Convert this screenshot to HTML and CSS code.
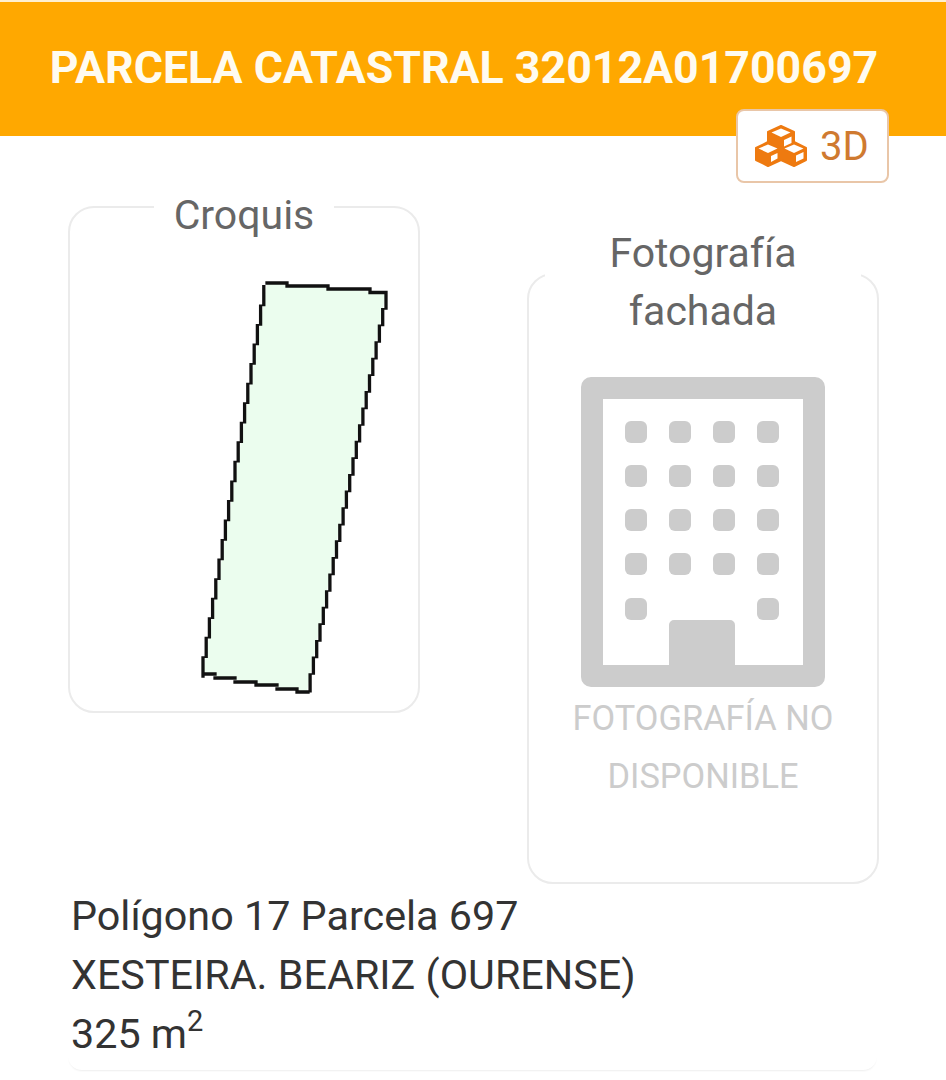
FILE: index.html
```html
<!DOCTYPE html>
<html lang="es">
<head>
<meta charset="utf-8">
<title>Parcela catastral</title>
<link rel="stylesheet" href="styles.css">
</head>
<body>
<header class="head"><h1 class="head-title">PARCELA CATASTRAL 32012A01700697</h1></header>
<a class="btn3d" href="#">
  <svg class="cubes" viewBox="0 0 52 42" aria-hidden="true">
    <g fill="#ee7a10" stroke="#ee7a10" stroke-width="2" stroke-linejoin="round">
      <path d="M26 1 39 7V20L26 26 13 20V7Z"/>
      <path d="M13 17 26 23V35L13 41 1 35V23Z"/>
      <path d="M39 17 51 23V35L39 41 26 35V23Z"/>
    </g>
    <g fill="#fff">
      <path d="M26 3.500 35.500 7.500 26 12 16.500 7.500Z"/>
      <path d="M13 19.500 22.500 23.500 13 28 3.500 23.500Z"/>
      <path d="M39 19.500 48.500 23.500 39 28 29.500 23.500Z"/>
      <path d="M36.500 11.500V18L29 21.500V15Z"/>
      <path d="M48.500 27V33.500L41 37V30.500Z"/>
      <path d="M22.500 28V33.500L16 37V31Z"/>
    </g>
  </svg>
  <span>3D</span>
</a>
<main class="panels">
  <fieldset class="box box-sketch">
    <legend class="box-label">Croquis</legend>
    <svg class="sketch" viewBox="70 243 348 468" aria-label="Croquis de la parcela">
      <path class="parcel-fill" d="M267 282 386 292 306.800 691 203 673Z"/>
      <path class="parcel-line" d="M267 282H287M287 285H328M328 288H370M370 291.500H386
      M386 292v15
      m-3.300 1.600v15m-3.300 1.600v15m-3.300 1.600v15m-3.300 1.600v15m-3.300 1.600v15m-3.300 1.600v15
      m-3.300 1.600v15m-3.300 1.600v15m-3.300 1.600v15m-3.300 1.600v15m-3.300 1.600v15m-3.300 1.600v15
      m-3.300 1.600v15m-3.300 1.600v15m-3.300 1.600v15m-3.300 1.600v15m-3.300 1.600v15m-3.300 1.600v15
      m-3.300 1.600v15m-3.300 1.600v15m-3.300 1.600v15m-3.300 1.600v15m-3.300 1.600v16
      M308 691H297M297 688H277M277 684H256M256 681H235M235 677H215M215 673H203
      M203 675v-18
      m3.200 -1.550v-18m3.200 -1.550v-18m3.200 -1.550v-18m3.200 -1.550v-18m3.200 -1.550v-18m3.200 -1.550v-18
      m3.200 -1.550v-18m3.200 -1.550v-18m3.200 -1.550v-18m3.200 -1.550v-18m3.200 -1.550v-18m3.200 -1.550v-18
      m3.200 -1.550v-18m3.200 -1.550v-18m3.200 -1.550v-18m3.200 -1.550v-18m3.200 -1.550v-18m3.200 -1.550v-18
      m3.200 -1.550v-18"/>
    </svg>
  </fieldset>
  <fieldset class="box box-photo">
    <legend class="box-label box-label-wide">Fotografía fachada</legend>
    <svg class="building" viewBox="0 0 244 310" aria-hidden="true">
      <path class="building-shape" fill-rule="evenodd" d="M10 0H234A10 10 0 0 1 244 10V300A10 10 0 0 1 234 310H10A10 10 0 0 1 0 300V10A10 10 0 0 1 10 0ZM22 22V288H88V248A5 5 0 0 1 93 243H149A5 5 0 0 1 154 248V288H222V22Z"/>
      <g class="building-shape">
        <rect x="44" y="44" width="22" height="22" rx="6"/><rect x="88" y="44" width="22" height="22" rx="6"/><rect x="132" y="44" width="22" height="22" rx="6"/><rect x="176" y="44" width="22" height="22" rx="6"/>
        <rect x="44" y="88" width="22" height="22" rx="6"/><rect x="88" y="88" width="22" height="22" rx="6"/><rect x="132" y="88" width="22" height="22" rx="6"/><rect x="176" y="88" width="22" height="22" rx="6"/>
        <rect x="44" y="132" width="22" height="22" rx="6"/><rect x="88" y="132" width="22" height="22" rx="6"/><rect x="132" y="132" width="22" height="22" rx="6"/><rect x="176" y="132" width="22" height="22" rx="6"/>
        <rect x="44" y="176" width="22" height="22" rx="6"/><rect x="88" y="176" width="22" height="22" rx="6"/><rect x="132" y="176" width="22" height="22" rx="6"/><rect x="176" y="176" width="22" height="22" rx="6"/>
        <rect x="44" y="221" width="22" height="22" rx="6"/><rect x="176" y="221" width="22" height="22" rx="6"/>
      </g>
    </svg>
    <p class="no-photo">FOTOGRAFÍA NO DISPONIBLE</p>
  </fieldset>
</main>
<section class="info">
  <p>Polígono 17 Parcela 697</p>
  <p>XESTEIRA. BEARIZ (OURENSE)</p>
  <p>325 m<sup class="sq">2</sup></p>
</section>
</body>
</html>
```
FILE: styles.css
```css
* { box-sizing: border-box; }
html, body { margin: 0; padding: 0; background: #fff; }
body {
  width: 946px;
  height: 1080px;
  overflow: hidden;
  position: relative;
  font-family: Roboto, "Liberation Sans", sans-serif;
}
.head {
  height: 136px;
  padding-right: 18px;
  background: #ffa800;
  border-top: 2px solid #fff0d0;
  display: flex;
  align-items: center;
  justify-content: center;
}
.head-title {
  margin: 0 0 2px;
  color: #fffbf0;
  font-size: 44.700px;
  font-weight: 700;
  white-space: nowrap;
}
.btn3d {
  position: absolute;
  left: 736px;
  top: 109px;
  width: 153px;
  height: 74px;
  display: flex;
  align-items: center;
  gap: 13px;
  padding-left: 17px;
  background: #fff;
  border: 2px solid #e9c6a8;
  border-radius: 8px;
  color: #cf7a30;
  font-size: 40px;
  text-decoration: none;
}
.cubes { width: 52px; height: 42px; flex: none; }
.panels {
  display: flex;
  align-items: flex-start;
  gap: 107px;
  padding-left: 68px;
}
.box {
  width: 352px;
  min-width: 0;
  margin: 0;
  padding: 0;
  border: 2px solid #ebebeb;
  border-radius: 26px;
}
.box-sketch { margin-top: 34px; height: 543px; }
.box-photo { margin-top: 72px; height: 676px; }
.box-label {
  margin: 0 auto;
  padding: 16px 20px 0;
  color: #666;
  font-size: 41px;
  line-height: 58px;
  text-align: center;
}
.box-label-wide { width: 316px; padding: 16px 0 0; }
.sketch { display: block; width: 348px; height: 468px; }
.parcel-fill { fill: #ebfdee; }
.parcel-line { fill: none; stroke: #111; stroke-width: 3.300; stroke-linecap: square; filter: blur(0.4px); }
.building { display: block; width: 244px; height: 310px; margin: 37px auto 0; }
.building-shape { fill: #ccc; }
.no-photo {
  margin: 2px 0 0;
  padding: 0 30px;
  color: #ccc;
  font-size: 34.400px;
  line-height: 58px;
  text-align: center;
}
.info {
  width: 809px;
  height: 183px;
  margin: 3px 0 0 68px;
  padding: 0 3px;
  border-radius: 0 0 14px 14px;
  box-shadow: 0 2px 2px -1px #eee;
  color: #333;
  font-size: 41.300px;
  line-height: 59px;
}
.info p { margin: 0; white-space: nowrap; }
.sq { font-size: 29px; line-height: 0; vertical-align: 17px; }
```
